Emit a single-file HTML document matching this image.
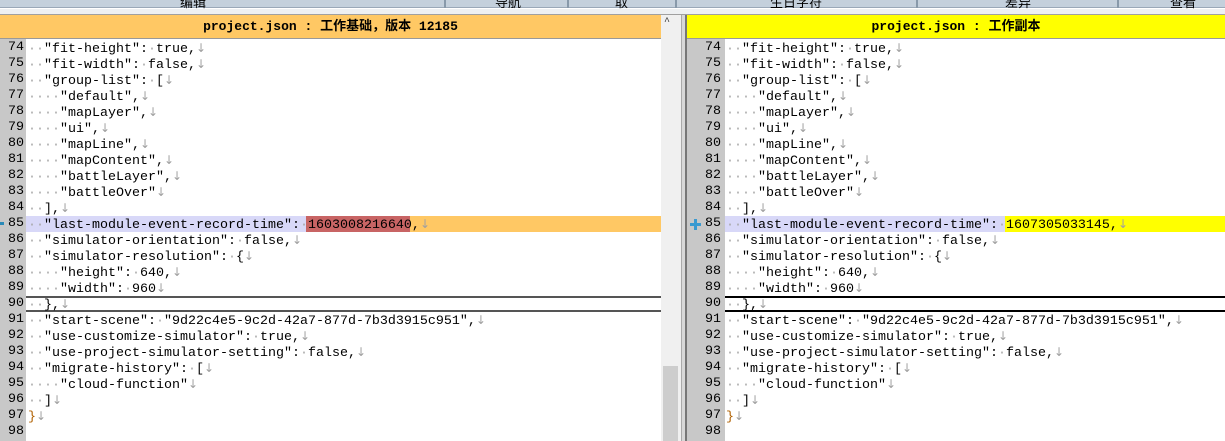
<!DOCTYPE html>
<html><head><meta charset="utf-8"><style>
*{margin:0;padding:0;box-sizing:border-box}
body{width:1225px;height:441px;overflow:hidden;background:#fff;position:relative;font-family:"Liberation Mono","Noto Sans CJK SC",monospace;font-size:13.33px}
.a{position:absolute}
.ln{position:absolute;height:16px;line-height:16px;white-space:pre;color:#000}
.num{position:absolute;height:16px;line-height:16px;text-align:right;color:#000}
.d{color:#a8a8a8}
.r{color:#a0a0a0;font-family:"DejaVu Sans",sans-serif;font-size:12px}
.tb{position:absolute;top:-8px;font-family:"Liberation Sans","Noto Sans CJK SC",sans-serif;font-size:13px;color:#000}
</style></head><body>
<div class="a" style="left:0;top:0;width:1225px;height:8px;background:#c4d0dc;border-bottom:1px solid #9aa8b8"></div>
<div class="a" style="left:444px;top:0;width:2px;height:8px;background:#8899aa"></div>
<div class="a" style="left:567px;top:0;width:2px;height:8px;background:#8899aa"></div>
<div class="a" style="left:675px;top:0;width:2px;height:8px;background:#8899aa"></div>
<div class="a" style="left:916px;top:0;width:2px;height:8px;background:#8899aa"></div>
<div class="a" style="left:1117px;top:0;width:2px;height:8px;background:#8899aa"></div>
<div class="tb" style="left:180px">编辑</div>
<div class="tb" style="left:495px">导航</div>
<div class="tb" style="left:615px">取</div>
<div class="tb" style="left:770px">生日字符</div>
<div class="tb" style="left:1005px">差异</div>
<div class="tb" style="left:1170px">查看</div>
<div class="a" style="left:0;top:9px;width:1225px;height:6px;background:#eef0f2;border-bottom:1px solid #a0a0a0"></div>
<div class="a" style="left:0;top:15px;width:661px;height:24px;background:#ffc864;border-bottom:1px solid #999;text-align:center;line-height:24px;font-weight:bold;font-size:13px">project.json : 工作基础，版本 12185</div>
<div class="a" style="left:661px;top:15px;width:20px;height:426px;background:#f0f0f0"></div>
<div class="a" style="left:664px;top:17px;font-size:10px;color:#333">^</div>
<div class="a" style="left:663px;top:366px;width:15px;height:75px;background:#cdcdcd"></div>
<div class="a" style="left:681px;top:15px;width:6px;height:426px;background:#d8d8d8;border-left:1px solid #aaa;border-right:2px solid #777"></div>
<div class="a" style="left:687px;top:15px;width:538px;height:24px;background:#ffff00;border-bottom:1px solid #999;text-align:center;line-height:24px;font-weight:bold;font-size:13px">project.json : 工作副本</div>
<div class="a" style="left:0;top:39px;width:26px;height:402px;background:#c8c8c8"></div>
<div class="a" style="left:687px;top:39px;width:38px;height:402px;background:#c8c8c8"></div>
<!-- line 85 highlights -->
<div class="a" style="left:26px;top:216px;width:635px;height:16px;background:#ffc864"></div>
<div class="a" style="left:26px;top:216px;width:280px;height:16px;background:#d8d8f8"></div>
<div class="a" style="left:306px;top:216px;width:104px;height:16px;background:#c86464"></div>
<div class="a" style="left:0;top:222px;width:4px;height:3px;background:#2a8ab8"></div>
<div class="a" style="left:725px;top:216px;width:500px;height:16px;background:#ffff00"></div>
<div class="a" style="left:725px;top:216px;width:280px;height:16px;background:#d8d8f8"></div>
<div class="a" style="left:690px;top:219px;width:11px;height:11px;background:linear-gradient(#3a9ad0,#3a9ad0) center/3px 11px no-repeat,linear-gradient(#3a9ad0,#3a9ad0) center/11px 3px no-repeat"></div>
<!-- line 90 borders -->
<div class="a" style="left:26px;top:296px;width:635px;height:2px;background:#555"></div>
<div class="a" style="left:26px;top:310px;width:635px;height:2px;background:#555"></div>
<div class="a" style="left:725px;top:296px;width:500px;height:2px;background:#000"></div>
<div class="a" style="left:725px;top:310px;width:500px;height:2px;background:#000"></div>
<div id="L"></div>
<script>
var D='<span class="d">·</span>',A='<span class="r">↓</span>';
function s(n){return D.repeat(n)}
var lines=[
s(2)+'"fit-height":'+D+'true,'+A,
s(2)+'"fit-width":'+D+'false,'+A,
s(2)+'"group-list":'+D+'['+A,
s(4)+'"default",'+A,
s(4)+'"mapLayer",'+A,
s(4)+'"ui",'+A,
s(4)+'"mapLine",'+A,
s(4)+'"mapContent",'+A,
s(4)+'"battleLayer",'+A,
s(4)+'"battleOver"'+A,
s(2)+'],'+A,
null,
s(2)+'"simulator-orientation":'+D+'false,'+A,
s(2)+'"simulator-resolution":'+D+'{'+A,
s(4)+'"height":'+D+'640,'+A,
s(4)+'"width":'+D+'960'+A,
s(2)+'},'+A,
s(2)+'"start-scene":'+D+'"9d22c4e5-9c2d-42a7-877d-7b3d3915c951",'+A,
s(2)+'"use-customize-simulator":'+D+'true,'+A,
s(2)+'"use-project-simulator-setting":'+D+'false,'+A,
s(2)+'"migrate-history":'+D+'['+A,
s(4)+'"cloud-function"'+A,
s(2)+']'+A,
'<span style="color:#b06000">}</span>'+A,
''];
var h='';
for(var i=0;i<lines.length;i++){
 var n=74+i,t=40+i*16;
 h+='<div class="num" style="left:0;width:24px;top:'+t+'px">'+n+'</div>';
 h+='<div class="num" style="left:687px;width:34px;top:'+t+'px">'+n+'</div>';
 var L=lines[i],R=lines[i];
 if(n==85){L=s(2)+'"last-module-event-record-time":'+D+'1603008216640,'+A;R=s(2)+'"last-module-event-record-time":'+D+'1607305033145,'+A;}
 h+='<div class="ln" style="left:28px;top:'+t+'px">'+L+'</div>';
 h+='<div class="ln" style="left:726px;top:'+t+'px">'+R+'</div>';
}
document.getElementById('L').innerHTML=h;
</script>
</body></html>
